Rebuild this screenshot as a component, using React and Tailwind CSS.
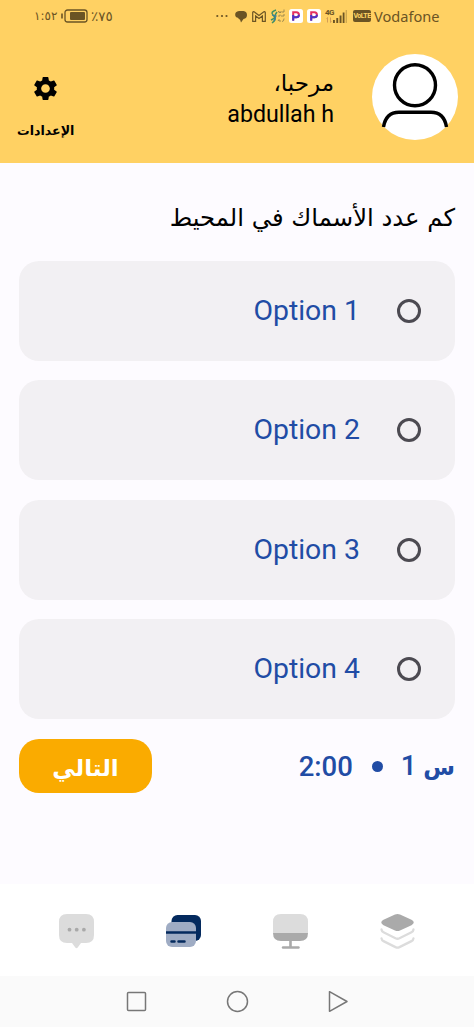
import { useState } from 'react';
import { MdSettings } from 'react-icons/md';

const options = ['Option 1', 'Option 2', 'Option 3', 'Option 4'];

const PayIcon = () => (
    <svg className="w-[14px] h-[14px]" viewBox="0 0 14 14">
        <rect width="14" height="14" rx="2.5" fill="#fff" />
        <path d="M4.2 11.5V3.2H7.4a2.5 2.5 0 0 1 0 5H5" fill="none" stroke="#e5305f" strokeWidth="2" />
        <path d="M4.2 11.8V6M5 8.2h2.4a2.5 2.5 0 0 0 2.5-2.500" fill="none" stroke="#4b35c9" strokeWidth="2" />
    </svg>
);

const StatusBar = () => (
    <div dir="ltr" className="h-8 flex items-center justify-between pl-[34px] pr-[34px] text-[#6b5424]">
        <div className="flex items-center">
            <span dir="rtl" className="w-[22px] flex justify-end whitespace-nowrap font-['DejaVu_Sans','Noto_Sans',sans-serif] text-[12px]">١:٥٢</span>
            <svg className="w-[27px] h-[14px] ml-[5px]" viewBox="0 0 27 14">
                <path d="M1 4.5v5" stroke="currentColor" strokeWidth="1.6" />
                <rect x="4" y="1" width="22" height="12" rx="2.5" fill="none" stroke="currentColor" strokeWidth="1.3" />
                <rect x="9" y="3" width="15" height="8" rx="1" fill="currentColor" />
            </svg>
            <span className="ml-[3px] whitespace-nowrap font-['DejaVu_Sans','Noto_Sans',sans-serif] text-[13.5px]">٪٧٥</span>
        </div>

        <div className="flex items-center">
            <svg className="w-3 h-3" viewBox="0 0 12 12" fill="currentColor">
                <circle cx="1.3" cy="6" r="1.1" /><circle cx="6" cy="6" r="1.1" /><circle cx="10.5" cy="6" r="1.1" />
            </svg>
            <svg className="w-3 h-[13px] ml-[7px]" viewBox="0 0 12 13" fill="currentColor">
                <path d="M4 1h4.500Q12 1.500 12 5T8.500 9L6 12.500 5 9.500Q4 9.800 3 7.800.2 7.500.2 4.800 0 1.500 4 1z" />
            </svg>
            <svg className="w-[14px] h-[11px] ml-[5px]" viewBox="0 0 14 11" fill="none" stroke="currentColor" strokeWidth="1.2">
                <path d="M.7 10.3V1.5Q1 .5 2.2.8L7 4.5 11.8.8q1.2-.3 1.5.7v8.8h-2.9V5L7 7.6 3.6 5v5.3z" />
            </svg>
            <svg className="w-[16px] h-[15px] ml-[4px]" viewBox="0 0 16 15" fill="none" strokeWidth="1.2">
                <path d="M6 1Q0 3 3 6t0 4l-2 1M7 3Q4 7 5 9t-3 5" stroke="#45905f" strokeWidth="1.5" />
                <path d="M2 6l4 1-2 5" stroke="#3b7da3" />
                <path d="M8 3l1-1v1.500h2V2M12 3h2V.5M8 7h2V5.500M11 7h3V5M8 12l1-1.500V12h2M12 12.500q2 0 2-3" stroke="#95834c" strokeWidth=".9" />
            </svg>
            <span className="ml-[3px]"><PayIcon /></span>
            <span className="ml-[4px]"><PayIcon /></span>
            <div className="ml-[4px] flex h-[15px]">
                <div className="w-2">
                    <span className="block w-2 h-2 text-[8px] leading-[8px] font-bold tracking-[-0.6px] font-['Roboto',sans-serif]">4G</span>
                    <svg className="w-2 h-[6px]" viewBox="0 0 8 6" fill="none" stroke="#d39d55" strokeWidth="1"><path d="M2.500 5.500v-5l-1 1M5.500.5v5l1-1" /></svg>
                </div>
                <svg className="w-[14px] h-[14px]" viewBox="0 0 14 14" fill="currentColor">
                    <path d="M0 11h1.9v3H0zM3.300 9h1.9v5H3.300zM6.600 6.5h1.9V14H6.600zM9.700 3.5h1.8V14H9.700z" />
                    <path d="M12.7 1h1.1v13h-1.1z" opacity=".4" />
                </svg>
            </div>
            <div className="ml-[6px] w-[18px] h-[12px] rounded-[2px] bg-[#6b5424] text-[#ffd363] text-[7px] leading-[12px] flex justify-center font-bold tracking-[-0.5px] font-['Roboto',sans-serif]">
                VoLTE
            </div>
            <span className="ml-[3px] w-[66px] whitespace-nowrap text-[14.6px] leading-none font-['Noto_Sans',sans-serif]">Vodafone</span>
        </div>
    </div>
);

const Header = () => (
    <header className="h-[163px] bg-[#ffd163]">
        <StatusBar />
        <div className="flex items-start pr-[16px] pl-[17px] pt-[22px]">
            <svg className="w-[86px] h-[86px] shrink-0" viewBox="0 0 86 86">
                <circle cx="43" cy="43" r="43" fill="#fff" />
                <circle cx="43" cy="31.3" r="20.5" fill="none" stroke="#000" strokeWidth="3.4" />
                <path d="M11.5 73C13 64 18 58.3 27 58.3h32c9 0 14 5.700 15.500 14.700" fill="none" stroke="#000" strokeWidth="3.4" />
            </svg>
            <div className="mr-[38px] pt-[13px] text-black">
                <p className="h-8 leading-8 text-[23px] font-['DejaVu_Sans',sans-serif]">مرحبا،</p>
                <p className="h-7 leading-[30px] text-[23.2px] font-['Roboto',sans-serif]">abdullah h</p>
            </div>
            <button className="mr-auto flex flex-col items-center pt-[20px] text-black">
                <MdSettings className="w-[29px] h-[29px]" />
                <span className="mt-[18px] h-5 leading-5 text-[12.600px] font-bold font-['DejaVu_Sans',sans-serif]">الإعدادات</span>
            </button>
        </div>
    </header>
);

const TabBar = () => (
    <nav dir="ltr" className="h-[92px] bg-white flex items-start justify-between pt-[29px] pl-[58px] pr-[58px]">
        <svg className="w-[37px] h-[38px]" viewBox="0 0 37 38">
            <path d="M9 1h19q8 0 8 8v13q0 8-8 8h-5l-3.300 4.500q-1.200 1.500-2.400 0L14 30H9q-8 0-8-8V9q0-8 8-8z" fill="#dcdcdc" />
            <g fill="#a9a9a9"><circle cx="11.500" cy="16.700" r="1.900" /><circle cx="18.700" cy="16.700" r="1.900" /><circle cx="25.900" cy="16.700" r="1.900" /></g>
        </svg>
        <svg className="w-[37px] h-[38px]" viewBox="0 0 37 38">
            <rect x="6.500" y="2" width="29.500" height="26" rx="6" fill="#042a5e" />
            <rect x="1" y="9" width="30" height="25" rx="6" fill="#9facc4" />
            <path d="M1 19.500h30" stroke="#042a5e" strokeWidth="2.500" />
            <path d="M6.500 28.500h3M13.500 28.500h6" stroke="#042a5e" strokeWidth="2.500" strokeLinecap="round" />
        </svg>
        <svg className="w-[37px] h-[38px]" viewBox="0 0 37 38">
            <path d="M1 20V9q0-8 8-8h19q8 0 8 8v11z" fill="#dcdcdc" />
            <path d="M1 20h35q0 8-8 8H9q-8 0-8-8zM17.200 28h2.600v6h-2.600z" fill="#aaa" />
            <path d="M11 34.500h15.500" stroke="#aaa" strokeWidth="2.400" strokeLinecap="round" />
        </svg>
        <svg className="w-[37px] h-[38px]" viewBox="0 0 37 38">
            <path d="M16 1.600q2.500-1 5 0l11.500 5.200q4.500 2.700 0 5.400L21 17.400q-2.500 1.200-5 0L4.500 12.200q-4.500-2.700 0-5.400z" fill="#aaa" />
            <path d="M2.500 16.500q.3 2 2 2.800l12 6q2 .9 4 0l12-6q1.700-.8 2-2.800M2.500 25.300q.3 2 2 2.800l12 6q2 .9 4 0l12-6q1.700-.8 2-2.800" fill="none" stroke="#dcdcdc" strokeWidth="2.300" strokeLinecap="round" />
        </svg>
    </nav>
);

const SystemBar = () => (
    <div dir="ltr" className="h-[51px] bg-[#fafafa] flex items-start justify-between pt-[14px] pl-[125px] pr-[125px]">
        <svg className="w-[23px] h-[23px]" viewBox="0 0 23 23" fill="none" stroke="#777" strokeWidth="1.500"><rect x="2.500" y="2.500" width="18" height="18" rx="1" /></svg>
        <svg className="w-[23px] h-[23px]" viewBox="0 0 23 23" fill="none" stroke="#777" strokeWidth="1.500"><circle cx="11.500" cy="11.500" r="10" /></svg>
        <svg className="w-[23px] h-[23px]" viewBox="0 0 23 23" fill="none" stroke="#777" strokeWidth="1.500" strokeLinejoin="round"><path d="M3.500 1.700v19.600l17.500-9.800z" /></svg>
    </div>
);

const App = () => {
    const [selected, setSelected] = useState(null);

    return (
        <div dir="rtl" className="w-[474px] h-[1027px] flex flex-col bg-[#fdfbff] overflow-hidden">
            <Header />

            <main className="flex-1 px-[19px] pt-[35px]">
                <h1 className="h-10 leading-10 whitespace-nowrap text-[24.3px] text-black font-['DejaVu_Sans',sans-serif]">
                    كم عدد الأسماك في المحيط
                </h1>

                <div className="mt-[23px] flex flex-col gap-[19.700px]">
                    {options.map((option, index) => (
                        <button
                            key={option}
                            onClick={() => setSelected(index)}
                            className="h-[99.800px] w-full flex items-center rounded-[20px] bg-[#f2f0f3] pr-[34px]"
                        >
                            <span className="w-6 h-6 rounded-full border-3 border-[#4c4a51] flex items-center justify-center">
                                {selected === index && <span className="w-3 h-3 rounded-full bg-[#214ca5]" />}
                            </span>
                            <span dir="ltr" className="mr-[37px] whitespace-nowrap text-[28.4px] text-[#214ca5] font-['Roboto',sans-serif]">{option}</span>
                        </button>
                    ))}
                </div>

                <div className="mt-[20px] h-[54px] flex items-center justify-between">
                    <div className="flex items-center text-[27.500px] font-medium text-[#214ca5]">
                        <span className="whitespace-nowrap text-[26px] tracking-[-0.5px] font-['Roboto','DejaVu_Sans',sans-serif]"><b className="text-[23px]">س</b> <span className="text-[28px]">1</span></span>
                        <span className="mr-[18px] w-[11px] h-[11px] rounded-full bg-[#214ca5]" />
                        <span className="mr-[19px] font-['Roboto',sans-serif]">2:00</span>
                    </div>
                    <button className="w-[133px] h-[54px] rounded-[20px] bg-[#faab00] text-white text-[23px] font-bold pt-1 font-['DejaVu_Sans',sans-serif]">
                        التالي
                    </button>
                </div>
            </main>

            <TabBar />
            <SystemBar />
        </div>
    );
};

export default App;
